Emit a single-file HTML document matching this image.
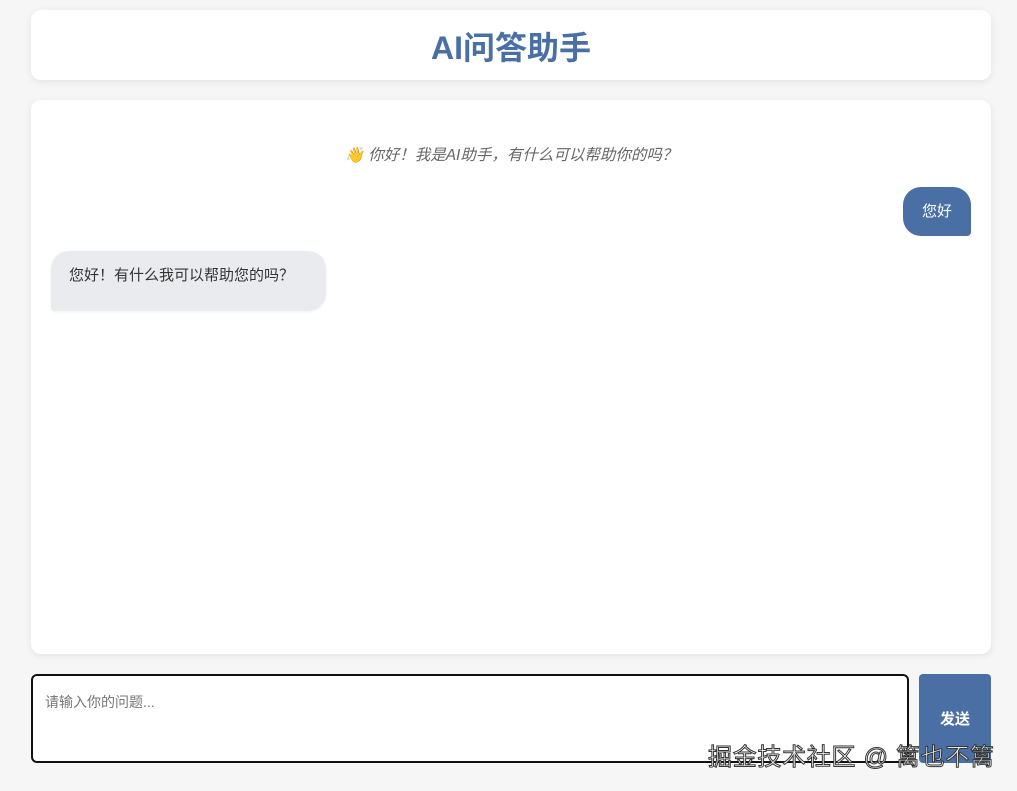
<!DOCTYPE html>
<html><head><meta charset="utf-8"><style>
body{margin:0;width:1017px;height:791px;background:#f6f6f6;font-family:"Liberation Sans","Noto Sans CJK SC",sans-serif;position:relative;overflow:hidden}
.hdr{position:absolute;left:31px;top:10px;width:960px;height:70px;background:#fff;border-radius:10px;box-shadow:0 2px 8px rgba(0,0,0,.08);text-align:center;line-height:76px;font-size:32px;font-weight:bold;color:#4a6fa5}
.chat{position:absolute;left:31px;top:100px;width:960px;height:554px;background:#fff;border-radius:10px;box-shadow:0 2px 8px rgba(0,0,0,.08)}
.welcome{position:absolute;top:43px;left:0;right:0;text-align:center;font-style:italic;font-size:15.5px;color:#666}
.user{position:absolute;right:20px;top:87px;width:68px;height:49px;background:#4a6fa5;color:#fff;border-radius:18px 18px 4px 18px;font-size:15px;line-height:49px;text-align:center}
.bot{position:absolute;left:20px;top:151px;width:275px;height:60px;background:#e9ebee;color:#333;border-radius:18px 18px 18px 4px;font-size:15px;line-height:50px;padding-left:18px;box-sizing:border-box;box-shadow:0 1px 3px rgba(0,0,0,.06)}
.inp{position:absolute;left:31px;top:674px;width:878px;height:89px;border:2px solid #111;border-radius:6px;background:#fff;box-sizing:border-box;padding:16px 12px;font-size:14px;color:#777}
.btn{position:absolute;left:919px;top:674px;width:72px;height:89px;background:#4a6fa5;border-radius:4px;color:#fff;font-size:15px;font-weight:bold;text-align:center;line-height:92px}
.wm{position:absolute;left:708px;top:737px;font-size:24px;color:#fff;-webkit-text-stroke:1px #333;letter-spacing:0.7px}
</style></head><body>
<div class="hdr">AI问答助手</div>
<div class="chat">
<div class="welcome">👋 你好！我是AI助手，有什么可以帮助你的吗？</div>
<div class="user">您好</div>
<div class="bot">您好！有什么我可以帮助您的吗？</div>
</div>
<div class="inp">请输入你的问题...</div>
<div class="btn">发送</div>
<div class="wm">掘金技术社区 @ 篱也不篱</div>
</body></html>
